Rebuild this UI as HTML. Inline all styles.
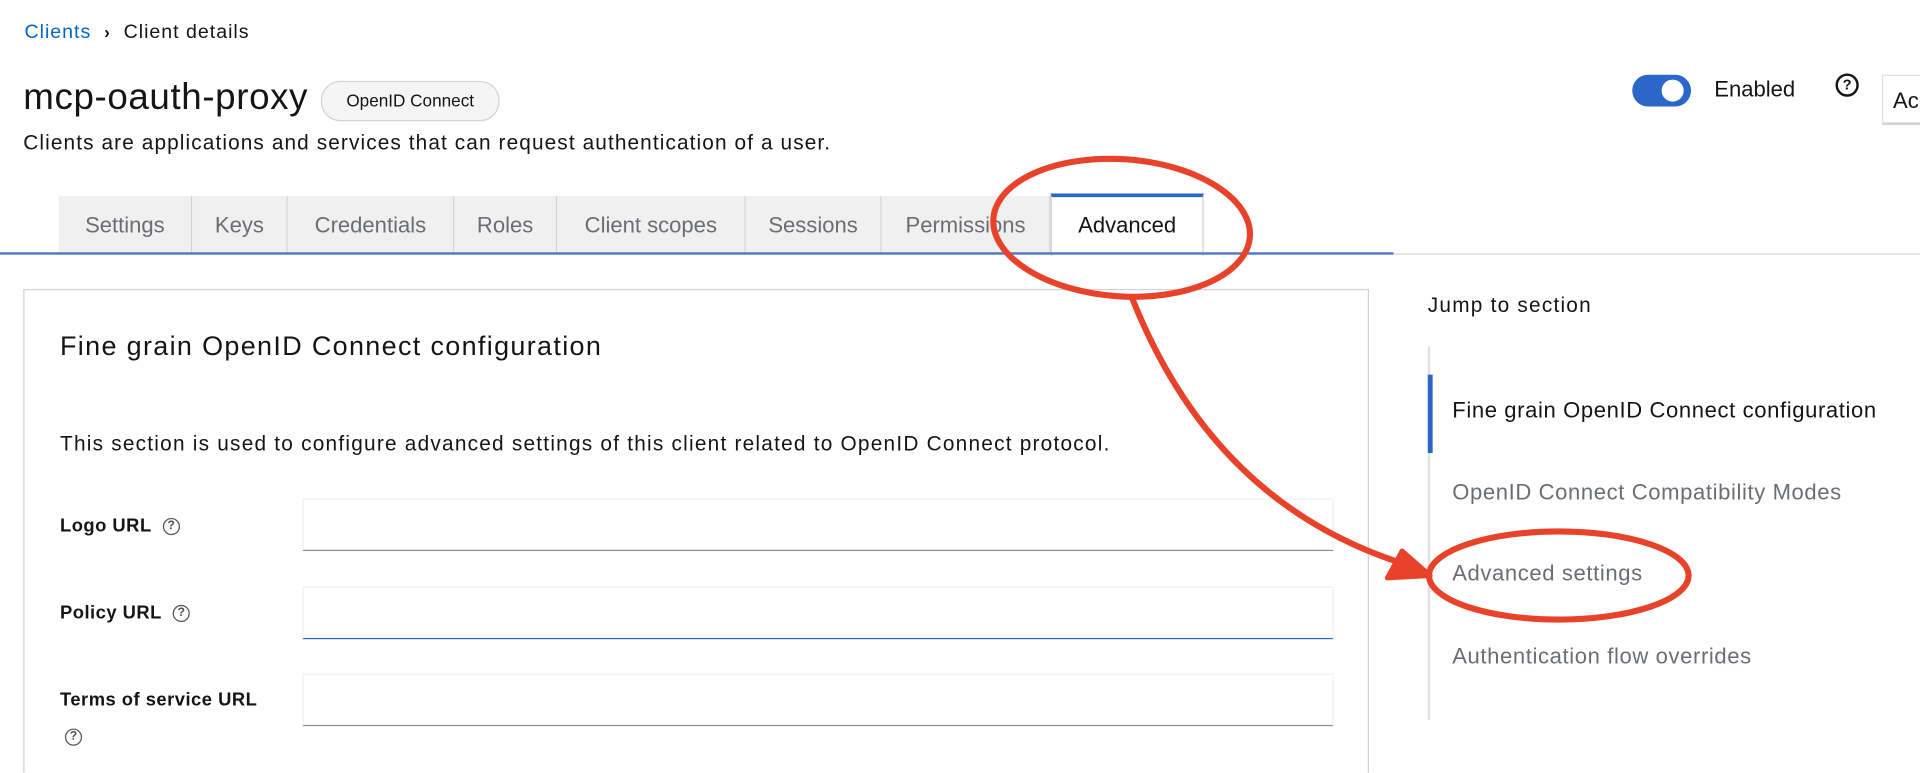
<!DOCTYPE html>
<html><head><meta charset="utf-8"><style>
html,body{margin:0;padding:0;background:#fff;overflow:hidden;width:1920px;height:773px}
#w{position:absolute;left:0;top:0;width:1568px;height:631px;overflow:hidden;transform:scale(1.22449);transform-origin:0 0;font-family:"Liberation Sans",sans-serif;color:#151515}
.a{position:absolute;white-space:nowrap}
.tab{position:absolute;top:160px;height:46px;background:#f0f0f0;border-right:1px solid #d2d2d2;color:#6a6e73;font-size:18px;line-height:48px;text-align:center}
.inp{position:absolute;left:247px;width:840px;border:1px solid #f0f0f0;border-bottom:1px solid #8a8d90;background:#fff}
.lbl{font-size:15px;font-weight:bold;letter-spacing:0.4px}
.q{display:inline-block;width:12px;height:12px;border:1.6px solid #4f5255;border-radius:50%;font-size:10px;line-height:12px;text-align:center;font-weight:bold;color:#4f5255;vertical-align:middle;letter-spacing:0}
.j{position:absolute;left:1186px;font-size:18px;color:#6a6e73;letter-spacing:0.5px}
</style></head><body><div id="w">
<div class="a" style="left:20px;top:18px;font-size:16px;letter-spacing:0.8px"><span style="color:#0066cc">Clients</span>&nbsp;&nbsp;<b style="font-size:14px">&#8250;</b>&nbsp;&nbsp;Client details</div>
<div class="a" style="left:19px;top:63px;font-size:30px;letter-spacing:0.5px">mcp-oauth-proxy</div>
<div class="a" style="left:262px;top:66px;width:144px;height:31px;border:1px solid #d2d2d2;border-radius:16px;background:#f5f5f5;font-size:14px;line-height:31px;text-align:center">OpenID Connect</div>
<div class="a" style="left:19px;top:107px;font-size:17px;letter-spacing:0.9px">Clients are applications and services that can request authentication of a user.</div>
<div class="a" style="left:1333px;top:61px;width:48px;height:26px;border-radius:13px;background:#2b66c9"></div>
<div class="a" style="left:1357px;top:65px;width:18px;height:18px;border-radius:50%;background:#fff"></div>
<div class="a" style="left:1400px;top:63px;font-size:18px">Enabled</div>
<div class="a" style="left:1499px;top:60px;width:15px;height:15px;border:2.5px solid #151515;border-radius:50%;font-size:12px;line-height:15px;text-align:center;font-weight:bold">?</div>
<div class="a" style="left:1537px;top:61px;width:22px;height:38px;border:1px solid #e0e0e0;border-right:none;border-bottom:2px solid #d2d2d2;font-size:18px;line-height:40px;padding-left:8px;overflow:hidden">Ac</div>
<div class="tab" style="left:48px;width:108px">Settings</div>
<div class="tab" style="left:157px;width:77px">Keys</div>
<div class="tab" style="left:235px;width:135px">Credentials</div>
<div class="tab" style="left:371px;width:83px">Roles</div>
<div class="tab" style="left:455px;width:153px">Client scopes</div>
<div class="tab" style="left:609px;width:110px">Sessions</div>
<div class="tab" style="left:720px;width:137px">Permissions</div>
<div class="tab" style="left:858px;width:123px;top:158px;height:48px;background:#fff;border-top:3px solid #2b66c9;border-left:1px solid #d2d2d2;color:#151515;line-height:46px">Advanced</div>
<div class="a" style="left:0;top:206px;width:1138px;height:2px;background:#4d7cc4"></div>
<div class="a" style="left:1138px;top:207px;width:430px;height:1px;background:#d2d2d2"></div>
<div class="a" style="left:19px;top:236px;width:1097px;height:395px;border:1px solid #d2d2d2;border-bottom:none"></div>
<div class="a" style="left:49px;top:270px;font-size:22px;letter-spacing:1.1px">Fine grain OpenID Connect configuration</div>
<div class="a" style="left:49px;top:353px;font-size:17px;letter-spacing:1px">This section is used to configure advanced settings of this client related to OpenID Connect protocol.</div>
<div class="a lbl" style="left:49px;top:421px">Logo URL &nbsp;<span class="q">?</span></div>
<div class="inp" style="top:407px;height:41px"></div>
<div class="a lbl" style="left:49px;top:492px">Policy URL &nbsp;<span class="q">?</span></div>
<div class="inp" style="top:479px;height:41px;border-bottom-color:#2b66c9"></div>
<div class="a lbl" style="left:49px;top:563px">Terms of service URL</div>
<div class="a" style="left:53px;top:593px"><span class="q">?</span></div>
<div class="inp" style="top:550px;height:41px"></div>
<div class="a" style="left:1166px;top:240px;font-size:17px;letter-spacing:1px">Jump to section</div>
<div class="a" style="left:1166px;top:283px;width:2px;height:305px;background:#e0e0e0"></div>
<div class="a" style="left:1166px;top:306px;width:4px;height:64px;background:#2b66c9"></div>
<div class="j" style="top:325px;color:#151515">Fine grain OpenID Connect configuration</div>
<div class="j" style="top:392px">OpenID Connect Compatibility Modes</div>
<div class="j" style="top:458px">Advanced settings</div>
<div class="j" style="top:526px">Authentication flow overrides</div>
<svg class="a" style="left:0;top:0" width="1568" height="631" viewBox="0 0 1568 631">
<g fill="none" stroke="#e8432a" stroke-width="5">
<ellipse cx="916" cy="186" rx="105" ry="56" transform="rotate(4 916 186)"/>
<ellipse cx="1273" cy="470" rx="106" ry="36"/>
<path d="M924 242 Q990 410 1145 460"/>
</g>
<polygon points="1168,470 1133,472 1145,450" fill="#e8432a" stroke="#e8432a" stroke-width="4" stroke-linejoin="round"/>
</svg>
</div></body></html>
